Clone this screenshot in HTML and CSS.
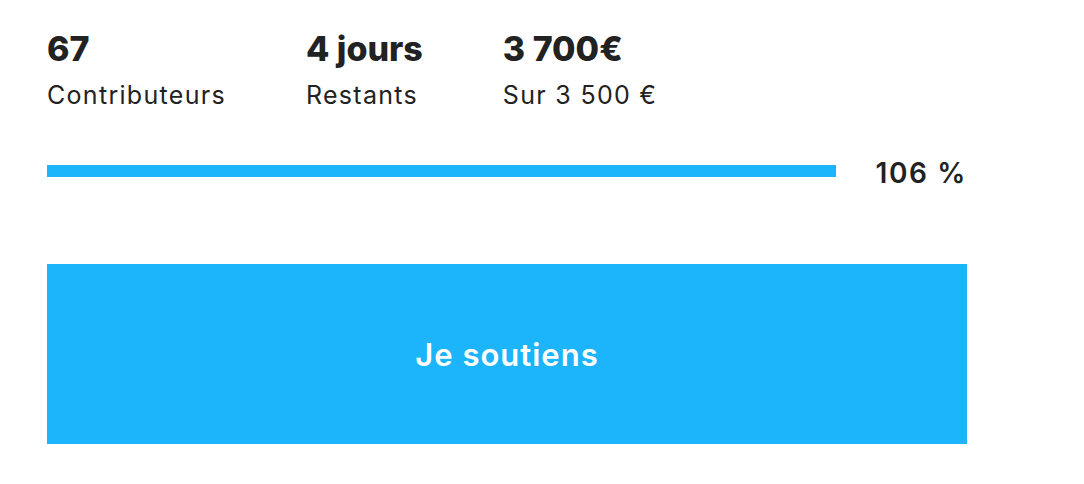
FILE: index.html
```html
<!DOCTYPE html>
<html>
<head>
  <meta charset="utf-8">
  <meta name="viewport" content="width=device-width">
  <title>Je soutiens</title>
<link rel="stylesheet" href="styles.css">
</head>
<body>
 <div id="main">
  <div class="stats">
   <div class="stat">
    <div class="stat-value">67</div>
    <div class="stat-label">Contributeurs</div>
   </div>
   <div class="stat">
    <div class="stat-value">4 jours</div>
    <div class="stat-label">Restants</div>
   </div>
   <div class="stat">
    <div class="stat-value">3 700€</div>
    <div class="stat-label">Sur 3 500 €</div>
   </div>
  </div>
  <div class="progress">
   <div class="progress-track"><div class="progress-bar" style="width:100%"></div></div>
   <div class="progress-value">106 %</div>
  </div>
  <a class="btn" href="#">Je soutiens</a>
 </div>
</body>
</html>
```
FILE: styles.css
```css
*,*:before,*:after {box-sizing:border-box;}
body{
 background:white;
 margin:0;
 padding:0;
 font-family:Inter,"Liberation Sans",sans-serif;
 font-variant-ligatures:none;
 color:#222;
}
#main{
 width:920px;
 margin-left:47px;
 padding-top:29px;
}
.stats{
 display:flex;
 gap:80px;
}
.stat-value{
 font-size:34px;
 font-weight:800;
 line-height:40px;
}
.stat-label{
 font-size:25px;
 line-height:32px;
 letter-spacing:1.3px;
 margin-top:10px;
}
.progress{
 display:flex;
 align-items:center;
 gap:40px;
 margin-top:41px;
}
.progress-track{
 flex:1;
 height:12px;
}
.progress-bar{
 height:100%;
 background:#1cb5fb;
}
.progress-value{
 font-size:28px;
 font-weight:600;
 letter-spacing:1.6px;
 margin-top:4px;
}
.btn{
 display:flex;
 align-items:center;
 justify-content:center;
 margin-top:74px;
 height:180px;
 background:#1cb5fb;
 color:white;
 font-size:31px;
 font-weight:600;
 letter-spacing:1px;
 text-decoration:none;
}
```
